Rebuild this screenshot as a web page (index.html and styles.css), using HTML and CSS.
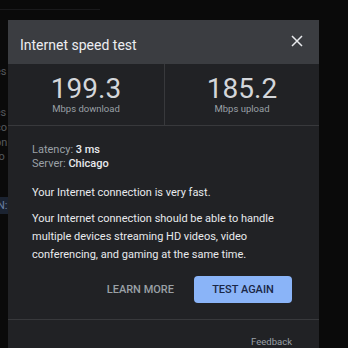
FILE: index.html
```html
<!DOCTYPE html>
<html>
<head>
<meta charset="utf-8">
<link rel="stylesheet" href="styles.css">
</head>
<body>
<div class="page">
  <div class="topline"></div>
  <div class="frag f1">es</div>
  <div class="frag f2">res</div>
  <div class="frag f3">co</div>
  <div class="frag f4">on</div>
  <div class="frag f5">ro</div>
  <div class="band">N:</div>
</div>
<div class="dialog">
  <div class="header">
    <div class="title">Internet speed test</div>
    <svg class="close" width="12" height="12" viewBox="0 0 12 12"><path d="M1 1 L11 11 M11 1 L1 11" stroke="#e8eaed" stroke-width="1.5" fill="none"/></svg>
  </div>
  <div class="speeds">
    <div class="speed">
      <div class="num">199.3</div>
      <div class="unit">Mbps download</div>
    </div>
    <div class="speed">
      <div class="num">185.2</div>
      <div class="unit">Mbps upload</div>
    </div>
  </div>
  <div class="content">
    <div class="meta"><span class="lbl">Latency:</span> <b>3 ms</b></div>
    <div class="meta"><span class="lbl">Server:</span> <b>Chicago</b></div>
    <p class="p1">Your Internet connection is very fast.</p>
    <p class="p2">Your Internet connection should be able to handle multiple devices streaming HD videos, video conferencing, and gaming at the same time.</p>
    <div class="actions">
      <span class="learn">LEARN MORE</span>
      <span class="again">TEST AGAIN</span>
    </div>
  </div>
  <div class="footer">Feedback</div>
</div>
</body>
</html>
```
FILE: styles.css
```css
html, body {
  margin: 0;
  padding: 0;
  background: #0a0a0a;
  width: 348px;
  height: 348px;
  overflow: hidden;
  font-family: Roboto, "Liberation Sans", sans-serif;
}
.page {
  position: relative;
  width: 348px;
  height: 348px;
}
.topline {
  position: absolute;
  left: 0;
  top: 9px;
  width: 100px;
  height: 1px;
  background: #1a1a1c;
}
.frag {
  position: absolute;
  left: -5px;
  font-size: 11px;
  line-height: 12px;
  color: #55595e;
}
.f1 { top: 66px; }
.f2 { top: 107px; left: -9px; }
.f3 { top: 122px; }
.f4 { top: 137px; }
.f5 { top: 151px; }
.band {
  position: absolute;
  left: 0;
  top: 197px;
  width: 20px;
  height: 17px;
  background: #1b2331;
  color: #6a80a3;
  font-size: 11px;
  line-height: 17px;
  text-indent: -3px;
}
.dialog {
  position: absolute;
  left: 8px;
  top: 20px;
  width: 311px;
  height: 328px;
  background: #212225;
  color: #e8eaed;
}
.header {
  height: 44px;
  background: #3b3d41;
  display: flex;
  align-items: center;
  justify-content: space-between;
  padding: 0 16px 0 12px;
}
.title {
  font-size: 14px;
  color: #eceef1;
  padding-top: 5px;
}
.close {
  display: block;
  margin-top: -2px;
}
.speeds {
  display: grid;
  grid-template-columns: 156px 1fr;
  height: 61px;
  border-bottom: 1px solid #38393c;
}
.speed {
  display: flex;
  flex-direction: column;
  align-items: center;
  padding-top: 11px;
}
.speed + .speed {
  border-left: 1px solid #38393c;
}
.num {
  font-size: 28px;
  line-height: 28px;
  color: #d4d6da;
}
.unit {
  font-size: 9.5px;
  line-height: 11px;
  color: #9aa0a6;
  margin-top: 0;
}
.content {
  padding: 17px 27px 0 24px;
  font-size: 11px;
}
.meta {
  line-height: 14px;
}
.lbl {
  color: #9aa0a6;
}
.meta b {
  font-weight: 500;
  color: #e8eaed;
}
.p1 {
  margin: 13px 0 0;
  line-height: 18px;
}
.p2 {
  margin: 8px 0 0;
  line-height: 18px;
}
.actions {
  display: flex;
  justify-content: flex-end;
  align-items: center;
  gap: 20px;
  margin-top: 12px;
}
.learn {
  font-size: 11px;
  font-weight: 500;
  color: #9aa0a6;
}
.again {
  width: 98px;
  height: 27px;
  background: #8ab4f8;
  border-radius: 4px;
  color: #1a2746;
  font-size: 11px;
  font-weight: 500;
  display: flex;
  align-items: center;
  justify-content: center;
}
.footer {
  margin-top: 16px;
  border-top: 1px solid #38393c;
  padding: 16px 27px 0 0;
  text-align: right;
  font-size: 9.5px;
  line-height: 12px;
  color: #9aa0a6;
}
```
